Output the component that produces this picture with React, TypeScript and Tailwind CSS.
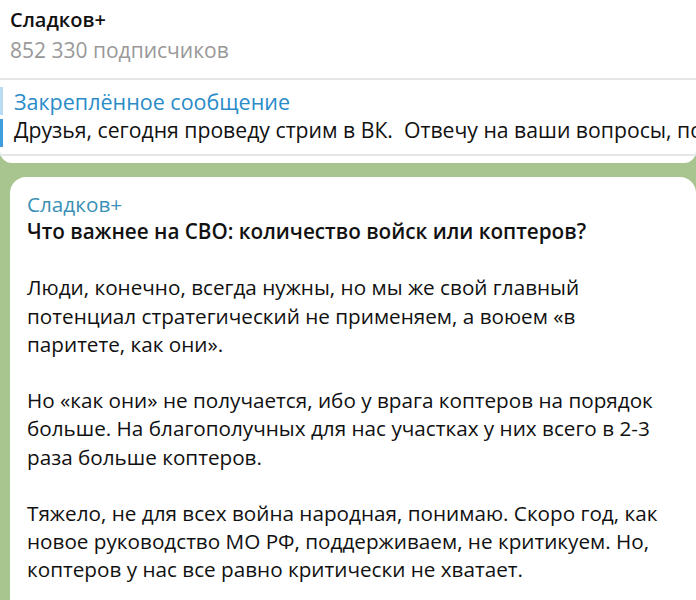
export default function App() {
  const font = { fontFamily: '"Open Sans", "Noto Sans", sans-serif' };

  return (
    <div
      className="w-[696px] h-[600px] overflow-hidden bg-[#a8c48f] flex flex-col"
      style={font}
    >
      {/* channel header */}
      <div className="shrink-0 bg-white px-[10px] pt-[6px] h-[78px] flex flex-col">
        <div className="text-[20px] leading-[28px] font-semibold text-[#111]">Сладков+</div>
        <div className="text-[21px] leading-[28px] text-[#999] mt-[2px]">852 330 подписчиков</div>
      </div>
      <div className="shrink-0 h-[2px] bg-[#e6e6e6]" />

      {/* pinned message */}
      <div className="shrink-0 bg-white rounded-b-[12px] flex flex-col">
        <div className="flex items-stretch h-[74px]">
          <div className="w-[3px] shrink-0 flex flex-col gap-[4px] py-[7px]">
            <div className="flex-1 bg-[#b9dcf3]" />
            <div className="flex-1 bg-[#3f9ee0]" />
          </div>
          <div className="pl-[11px] pt-[8px] flex flex-col overflow-hidden whitespace-pre">
            <div className="text-[21.5px] leading-[28px] text-[#2a8bc9]">Закреплённое сообщение</div>
            <div className="text-[21.2px] leading-[28px] text-[#111]">
              Друзья, сегодня проведу стрим в ВК.  Отвечу на ваши вопросы, подключайтесь
            </div>
          </div>
        </div>
        <div className="h-[2px] bg-[#e6e6e6]" />
        <div className="h-[7px]" />
      </div>

      {/* message bubble */}
      <div className="shrink-0 pl-[10px] pt-[14px]">
        <div className="bg-white rounded-t-[16px] pl-[17px] pr-[12px] pt-[13px] text-[20.7px] leading-[28.2px] text-[#111]">
          <div className="text-[#3b90b5]">Сладков+</div>
          <div className="font-semibold -mt-[1px]">Что важнее на СВО: количество войск или коптеров?</div>
          <div className="h-[28px]" />
          <p>
            Люди, конечно, всегда нужны, но мы же свой главный
            <br />
            потенциал стратегический не применяем, а воюем «в
            <br />
            паритете, как они».
          </p>
          <div className="h-[28.2px]" />
          <p>
            Но «как они» не получается, ибо у врага коптеров на порядок
            <br />
            больше. На благополучных для нас участках у них всего в 2-3
            <br />
            раза больше коптеров.
          </p>
          <div className="h-[28.2px]" />
          <p>
            Тяжело, не для всех война народная, понимаю. Скоро год, как
            <br />
            новое руководство МО РФ, поддерживаем, не критикуем. Но,
            <br />
            коптеров у нас все равно критически не хватает.
          </p>
          <div className="h-[40px]" />
        </div>
      </div>
    </div>
  );
}
